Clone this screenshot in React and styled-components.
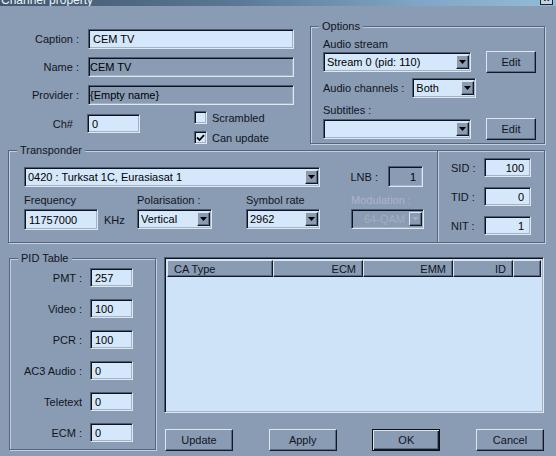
import React from 'react';
import styled, { createGlobalStyle, css } from 'styled-components';

const C = {
  panel: '#8a9bb4',
  field: '#d5e7fb',
  list: '#cfe3f8',
  text: '#10151d',
  dim: '#aab6c7',
};

const Global = createGlobalStyle`
  html, body { margin: 0; padding: 0; background: ${C.panel}; }
  body { font-family: "Liberation Sans", Arial, sans-serif; font-size: 11px; color: ${C.text}; }
  * { box-sizing: border-box; }
`;

const sunken = css`
  border: 1px solid;
  border-color: #4d5c72 #dfe7f1 #dfe7f1 #4d5c72;
  box-shadow: inset 1px 1px 0 #0e141e, inset -1px -1px 0 #a4b2c6;
`;
const raised = css`
  border: 1px solid;
  border-color: #dde5ef #121824 #121824 #dde5ef;
  box-shadow: inset -1px -1px 0 #5c6b82;
`;
const etched = css`
  border: 1px solid #56657c;
  box-shadow: inset 1px 1px 0 #c4cfdd, 1px 1px 0 #c4cfdd;
`;

const Window = styled.div`
  width: 556px;
  height: 456px;
  overflow: hidden;
  background: ${C.panel};
  display: flex;
  flex-direction: column;
`;

const TitleBar = styled.div`
  height: 6px;
  flex: none;
  display: flex;
  align-items: flex-end;
  justify-content: space-between;
  overflow: hidden;
  background: linear-gradient(90deg, #425870 0%, #587592 40%, #7fa6c4 75%, #93bcd8 100%);
`;

const TitleText = styled.span`
  color: #eef3f8;
  font-size: 12px;
  line-height: 12px;
  padding-left: 1px;
  white-space: nowrap;
`;

const CloseBtn = styled.span`
  width: 13px;
  height: 13px;
  margin: 0 3px 1px 0;
  background: #c5d3e1;
  border: 1px solid #1a2230;
  font-size: 10px;
  line-height: 10px;
  text-align: center;
  font-weight: bold;
`;

const Content = styled.div`
  padding: 0 11px 0 8px;
  display: flex;
  flex-direction: column;
`;

const TopRow = styled.div`
  display: flex;
  padding-top: 20px;
`;

const GeneralCol = styled.div`
  width: 292px;
  padding-top: 3px;
  display: flex;
  flex-direction: column;
  gap: 8px;
`;

const FormRow = styled.div`
  display: flex;
  align-items: center;
`;

const FieldLabel = styled.span`
  width: ${(p) => p.$w}px;
  margin-right: ${(p) => p.$gap ?? 9}px;
  text-align: right;
  white-space: nowrap;
  flex: none;
  color: ${(p) => (p.$disabled ? C.dim : C.text)};
`;

const TextBox = styled.div`
  ${sunken};
  width: ${(p) => p.$w}px;
  height: ${(p) => p.$h ?? 20}px;
  flex: none;
  background: ${(p) => (p.$disabled ? C.panel : C.field)};
  padding: 0 ${(p) => (p.$right ? 6 : 3)}px 0 ${(p) => (p.$disabled ? 1 : 4)}px;
  display: flex;
  align-items: center;
  justify-content: ${(p) => (p.$right ? 'flex-end' : 'flex-start')};
  white-space: nowrap;
  color: #000;
`;

const ChRow = styled.div`
  display: flex;
  align-items: flex-start;
  margin-top: -2px;
`;

const ChField = styled.div`
  display: flex;
  align-items: center;
  margin-top: 3px;
`;

const CheckCol = styled.div`
  display: flex;
  flex-direction: column;
  gap: 7px;
  margin-left: 54px;
`;

const CheckRow = styled.label`
  display: flex;
  align-items: center;
  gap: 5px;
  height: 13px;
`;

const CheckBox = styled.span`
  ${sunken};
  width: 13px;
  height: 13px;
  background: ${C.field};
  display: flex;
  align-items: center;
  justify-content: center;
`;

const GroupBox = styled.div`
  ${etched};
  position: relative;
  width: ${(p) => p.$w}px;
  height: ${(p) => p.$h}px;
  flex: none;
  ${(p) => p.$noLeft && css`border-left: none; box-shadow: inset 0 1px 0 #c4cfdd, 1px 1px 0 #c4cfdd;`}
`;

const Legend = styled.span`
  position: absolute;
  top: -7px;
  left: 8px;
  padding: 0 3px;
  line-height: 13px;
  background: ${C.panel};
`;

const OptionsBox = styled(GroupBox)`
  margin-left: auto;
  padding: 11px 0 0 12px;
  display: flex;
  flex-direction: column;
`;

const Caption = styled.span`
  line-height: 13px;
  height: 13px;
  color: ${(p) => (p.$disabled ? C.dim : C.text)};
  white-space: nowrap;
`;

const OptRow = styled.div`
  display: flex;
  align-items: center;
  margin-top: ${(p) => p.$mt ?? 0}px;
`;

const Button = styled.button`
  ${raised};
  font: inherit;
  color: ${C.text};
  background: ${C.panel};
  width: ${(p) => p.$w}px;
  height: 22px;
  padding: 0;
  margin-left: ${(p) => p.$ml ?? 0}px;
  flex: none;
  ${(p) =>
    p.$default &&
    css`
      border: 1px solid #0b1018;
      box-shadow: inset 1px 1px 0 #dde5ef, inset -1px -1px 0 #121824, inset -2px -2px 0 #5c6b82;
    `}
`;

const ComboBox = styled.div`
  ${sunken};
  width: ${(p) => p.$w}px;
  height: ${(p) => p.$h ?? 20}px;
  flex: none;
  display: flex;
  padding: 2px 1px 2px 1px;
  background: ${(p) => (p.$disabled ? C.panel : C.field)};
  margin-left: ${(p) => p.$ml ?? 0}px;
`;

const ComboText = styled.span`
  flex: 1;
  display: flex;
  align-items: center;
  padding-left: ${(p) => (p.$disabled ? 11 : 2)}px;
  white-space: nowrap;
  overflow: hidden;
  color: ${(p) => (p.$disabled ? '#a3afbf' : '#000')};
`;

const ArrowBtn = styled.span`
  ${raised};
  width: 13px;
  flex: none;
  background: ${C.panel};
  display: flex;
  align-items: center;
  justify-content: center;
`;

function Combo({ w, h, ml, value, disabled }) {
  return (
    <ComboBox $w={w} $h={h} $ml={ml} $disabled={disabled}>
      <ComboText $disabled={disabled}>{value}</ComboText>
      <ArrowBtn>
        <svg width="7" height="4" viewBox="0 0 7 4">
          <path d="M0 0H7L3.5 4Z" fill={disabled ? '#a3afbf' : '#000'} />
        </svg>
      </ArrowBtn>
    </ComboBox>
  );
}

const MidRow = styled.div`
  display: flex;
  margin-top: 6px;
`;

const TransBox = styled(GroupBox)`
  padding: 15px 0 0 15px;
  display: flex;
  flex-direction: column;
`;

const TransRow = styled.div`
  display: flex;
  align-items: center;
`;

const FieldGrid = styled.div`
  display: flex;
  margin-top: 7px;
`;

const FieldStack = styled.div`
  width: ${(p) => p.$w}px;
  flex: none;
  display: flex;
  flex-direction: column;
  gap: 2px;
  padding-left: ${(p) => p.$pl ?? 0}px;
`;

const InlineRow = styled.div`
  display: flex;
  align-items: center;
  gap: 6px;
`;

const IdsBox = styled(GroupBox)`
  padding: 7px 0 0 13px;
  display: flex;
  flex-direction: column;
  gap: 10px;
`;

const BottomRow = styled.div`
  display: flex;
  margin-top: 14px;
`;

const PidBox = styled(GroupBox)`
  margin: 1px 0 0 1px;
  padding: 9px 0 0 0;
  display: flex;
  flex-direction: column;
  gap: 12px;
`;

const RightCol = styled.div`
  margin-left: 8px;
  width: 380px;
  display: flex;
  flex-direction: column;
`;

const ListView = styled.div`
  ${sunken};
  height: 156px;
  background: ${C.list};
  padding: 2px 2px 0 2px;
`;

const HeaderRow = styled.div`
  display: flex;
  height: 17px;
`;

const HeaderCell = styled.div`
  ${raised};
  width: ${(p) => p.$w}px;
  flex: ${(p) => (p.$grow ? 1 : 'none')};
  background: ${C.panel};
  display: flex;
  align-items: center;
  justify-content: ${(p) => (p.$right ? 'flex-end' : 'flex-start')};
  padding: 0 6px;
  white-space: nowrap;
`;

const ButtonRow = styled.div`
  display: flex;
  justify-content: space-between;
  margin-top: 16px;
  padding-left: 1px;
`;

const pids = [
  ['PMT :', '257'],
  ['Video :', '100'],
  ['PCR :', '100'],
  ['AC3 Audio :', '0'],
  ['Teletext', '0'],
  ['ECM :', '0'],
];

export default function App() {
  return (
    <>
      <Global />
      <Window>
        <TitleBar>
          <TitleText>Channel property</TitleText>
          <CloseBtn>x</CloseBtn>
        </TitleBar>
        <Content>
          <TopRow>
            <GeneralCol>
              <FormRow>
                <FieldLabel $w={71}>Caption :</FieldLabel>
                <TextBox $w={206}>CEM TV</TextBox>
              </FormRow>
              <FormRow>
                <FieldLabel $w={71}>Name :</FieldLabel>
                <TextBox $w={206} $disabled>CEM TV</TextBox>
              </FormRow>
              <FormRow>
                <FieldLabel $w={71}>Provider :</FieldLabel>
                <TextBox $w={206} $disabled>{'{Empty name}'}</TextBox>
              </FormRow>
              <ChRow>
                <ChField>
                  <FieldLabel $w={65} $gap={14}>Ch#</FieldLabel>
                  <TextBox $w={53} $h={19}>0</TextBox>
                </ChField>
                <CheckCol>
                  <CheckRow>
                    <CheckBox />
                    Scrambled
                  </CheckRow>
                  <CheckRow>
                    <CheckBox>
                      <svg width="9" height="8" viewBox="0 0 9 8">
                        <path d="M1 3.5L3.5 6L8 1.2" fill="none" stroke="#000" strokeWidth="1.8" />
                      </svg>
                    </CheckBox>
                    Can update
                  </CheckRow>
                </CheckCol>
              </ChRow>
            </GeneralCol>
            <OptionsBox $w={235} $h={118}>
              <Legend>Options</Legend>
              <Caption>Audio stream</Caption>
              <OptRow>
                <Combo w={148} value="Stream 0  (pid: 110)" />
                <Button $w={50} $ml={15}>Edit</Button>
              </OptRow>
              <OptRow $mt={5}>
                <Caption>Audio channels :</Caption>
                <Combo w={64} ml={8} value="Both" />
              </OptRow>
              <OptRow $mt={6}>
                <Caption>Subtitles :</Caption>
              </OptRow>
              <OptRow $mt={1}>
                <Combo w={148} value="" />
                <Button $w={50} $ml={15}>Edit</Button>
              </OptRow>
            </OptionsBox>
          </TopRow>

          <MidRow>
            <TransBox $w={430} $h={93}>
              <Legend>Transponder</Legend>
              <TransRow>
                <Combo w={296} value="0420 : Turksat 1C, Eurasiasat 1" />
                <FieldLabel $w={58} $gap={10}>LNB :</FieldLabel>
                <TextBox $w={35} $h={21} $disabled $right>1</TextBox>
              </TransRow>
              <FieldGrid>
                <FieldStack $w={113}>
                  <Caption>Frequency</Caption>
                  <InlineRow>
                    <TextBox $w={74} $h={21}>11757000</TextBox>
                    KHz
                  </InlineRow>
                </FieldStack>
                <FieldStack $w={109}>
                  <Caption>Polarisation :</Caption>
                  <Combo w={75} value="Vertical" />
                </FieldStack>
                <FieldStack $w={105}>
                  <Caption>Symbol rate</Caption>
                  <Combo w={74} value="2962" />
                </FieldStack>
                <FieldStack $w={74}>
                  <Caption $disabled>Modulation :</Caption>
                  <Combo w={73} value="64-QAM" disabled />
                </FieldStack>
              </FieldGrid>
            </TransBox>
            <IdsBox $w={107} $h={93} $noLeft>
              <FormRow>
                <FieldLabel $w={33} $gap={0} style={{ textAlign: 'left' }}>SID :</FieldLabel>
                <TextBox $w={47} $h={19} $right>100</TextBox>
              </FormRow>
              <FormRow>
                <FieldLabel $w={33} $gap={0} style={{ textAlign: 'left' }}>TID :</FieldLabel>
                <TextBox $w={47} $h={19} $right>0</TextBox>
              </FormRow>
              <FormRow>
                <FieldLabel $w={33} $gap={0} style={{ textAlign: 'left' }}>NIT :</FieldLabel>
                <TextBox $w={47} $h={19} $right>1</TextBox>
              </FormRow>
            </IdsBox>
          </MidRow>

          <BottomRow>
            <PidBox $w={147} $h={192}>
              <Legend>PID Table</Legend>
              {pids.map(([label, value]) => (
                <FormRow key={label}>
                  <FieldLabel $w={72} $gap={8}>{label}</FieldLabel>
                  <TextBox $w={43} $h={19}>{value}</TextBox>
                </FormRow>
              ))}
            </PidBox>
            <RightCol>
              <ListView>
                <HeaderRow>
                  <HeaderCell $w={106}>CA Type</HeaderCell>
                  <HeaderCell $w={90} $right>ECM</HeaderCell>
                  <HeaderCell $w={90} $right>EMM</HeaderCell>
                  <HeaderCell $w={60} $right>ID</HeaderCell>
                  <HeaderCell $grow />
                </HeaderRow>
              </ListView>
              <ButtonRow>
                <Button $w={68}>Update</Button>
                <Button $w={68}>Apply</Button>
                <Button $w={68} $default>OK</Button>
                <Button $w={68}>Cancel</Button>
              </ButtonRow>
            </RightCol>
          </BottomRow>
        </Content>
      </Window>
    </>
  );
}
